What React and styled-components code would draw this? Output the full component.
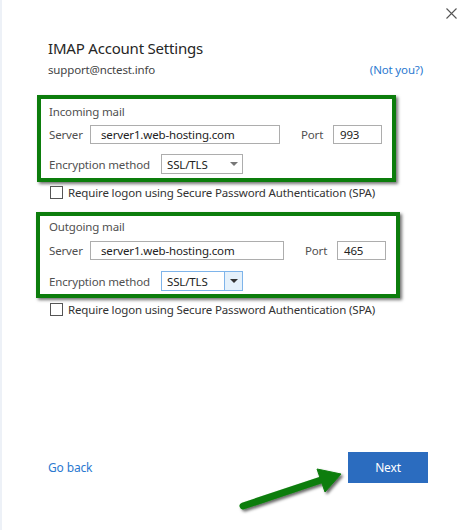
import React from "react";
import styled, { createGlobalStyle } from "styled-components";

const GlobalStyle = createGlobalStyle`
  html, body { margin: 0; padding: 0; background: #fff; }
  body { font-family: "Segoe UI", "Noto Sans", sans-serif; }
`;

const Dialog = styled.div`
  position: relative;
  width: 472px;
  height: 530px;
  box-sizing: border-box;
  border-left: 2px solid #edf1f7;
  background: #fff;
  display: flex;
  flex-direction: column;
  font-size: 11.5px;
  letter-spacing: -0.15px;
  color: #444;
  overflow: hidden;
`;

const TopBar = styled.div`
  height: 26px;
  display: flex;
  justify-content: flex-end;
  align-items: flex-start;
  padding: 8px 14px 0 0;
  box-sizing: border-box;
`;

const CloseButton = styled.button`
  width: 12px;
  height: 12px;
  padding: 0;
  border: none;
  background: none;
  cursor: pointer;
  display: flex;
`;

const Content = styled.div`
  padding: 12px 49px 0 46px;
  display: flex;
  flex-direction: column;
`;

const Title = styled.h1`
  margin: 0;
  font-size: 15px;
  line-height: 20px;
  letter-spacing: -0.2px;
  font-weight: 400;
  color: #262626;
`;

const AccountRow = styled.div`
  margin-top: 4px;
  display: flex;
  justify-content: space-between;
  line-height: 16px;
`;

const Link = styled.a`
  color: #2b79d0;
  text-decoration: none;
  cursor: pointer;
  font-size: ${(p) => p.$size || 11.5}px;
`;

const Highlight = styled.div`
  margin-top: ${(p) => p.$top}px;
  margin-left: ${(p) => p.$left}px;
  width: ${(p) => p.$width}px;
  box-sizing: border-box;
  border: 4px solid #0c7d0c;
  box-shadow: 2px 2px 3px rgba(0, 0, 0, 0.55);
  padding: ${(p) => p.$pad};
  display: flex;
  flex-direction: column;
`;

const GroupLabel = styled.div`
  line-height: 16px;
  color: #505050;
`;

const FieldRow = styled.div`
  margin-top: ${(p) => p.$top}px;
  display: flex;
  align-items: center;
  height: 20px;
`;

const Label = styled.span`
  width: ${(p) => p.$width}px;
  margin-left: ${(p) => p.$gap || 0}px;
  flex-shrink: 0;
  color: #505050;
`;

const TextInput = styled.div`
  width: ${(p) => p.$width}px;
  height: 19px;
  box-sizing: border-box;
  border: 1px solid #adadad;
  padding-left: ${(p) => p.$pad}px;
  display: flex;
  align-items: center;
  color: #222;
`;

const Select = styled.div`
  width: 82px;
  height: 20px;
  box-sizing: border-box;
  border: 1px solid ${(p) => (p.$active ? "#7eb4ea" : "#adadad")};
  display: flex;
  align-items: stretch;
  color: #222;
  background: #fff;
`;

const SelectValue = styled.span`
  flex: 1;
  padding-left: 5px;
  display: flex;
  align-items: center;
`;

const SelectButton = styled.span`
  width: 17px;
  display: flex;
  align-items: center;
  justify-content: center;
  background: ${(p) => (p.$active ? "#e5f1fb" : "transparent")};
  border-left: 1px solid ${(p) => (p.$active ? "#7eb4ea" : "transparent")};
`;

const Caret = styled.span`
  width: 0;
  height: 0;
  border-left: 4px solid transparent;
  border-right: 4px solid transparent;
  border-top: 4px solid ${(p) => (p.$active ? "#333" : "#777")};
`;

const CheckRow = styled.label`
  margin-top: ${(p) => p.$top}px;
  margin-left: 2px;
  display: flex;
  align-items: center;
  gap: 5px;
  height: 13px;
  color: #333;
`;

const Checkbox = styled.span`
  width: 13px;
  height: 13px;
  box-sizing: border-box;
  border: 1px solid #555;
  background: #fff;
`;

const Spacer = styled.div`
  flex: 1;
`;

const Footer = styled.div`
  display: flex;
  align-items: center;
  justify-content: space-between;
  padding: 0 44px 47px 46px;
`;

const NextButton = styled.button`
  width: 80px;
  height: 31px;
  border: none;
  background: #2b6cbf;
  color: #fff;
  font-family: inherit;
  font-size: 12px;
  letter-spacing: -0.15px;
  cursor: pointer;
`;

const Annotation = styled.svg`
  position: absolute;
  left: 0;
  top: 0;
  pointer-events: none;
`;

const MailGroup = ({ title, server, port, wide, active, top, left, width, pad }) => (
  <Highlight $top={top} $left={left} $width={width} $pad={pad}>
    <GroupLabel>{title}</GroupLabel>
    <FieldRow $top={wide ? 5 : 4}>
      <Label $width={41}>Server</Label>
      <TextInput $width={wide ? 194 : 190} $pad={10}>{server}</TextInput>
      <Label $width={32} $gap={21}>Port</Label>
      <TextInput $width={49} $pad={6}>{port}</TextInput>
    </FieldRow>
    <FieldRow $top={wide ? 11 : 10}>
      <Label $width={112}>Encryption method</Label>
      <Select $active={active}>
        <SelectValue>SSL/TLS</SelectValue>
        <SelectButton $active={active}>
          <Caret $active={active} />
        </SelectButton>
      </Select>
    </FieldRow>
  </Highlight>
);

export default function App() {
  return (
    <>
      <GlobalStyle />
      <Dialog>
        <TopBar>
          <CloseButton aria-label="Close">
            <svg width="11" height="11" viewBox="0 0 11 11">
              <path d="M0.5 0.5 L10.5 10.5 M10.5 0.5 L0.5 10.5" stroke="#555" strokeWidth="1.1" />
            </svg>
          </CloseButton>
        </TopBar>
        <Content>
          <Title>IMAP Account Settings</Title>
          <AccountRow>
            <span>support@nctest.info</span>
            <Link>(Not you?)</Link>
          </AccountRow>
          <MailGroup
            title="Incoming mail"
            server="server1.web-hosting.com"
            port="993"
            top={17}
            left={-11}
            width={359}
            pad="5px 8px 4px 8px"
          />
          <CheckRow $top={4}>
            <Checkbox />
            Require logon using Secure Password Authentication (SPA)
          </CheckRow>
          <MailGroup
            title="Outgoing mail"
            server="server1.web-hosting.com"
            port="465"
            wide
            active
            top={13}
            left={-12}
            width={364}
            pad="3px 8px 3px 9px"
          />
          <CheckRow $top={5}>
            <Checkbox />
            Require logon using Secure Password Authentication (SPA)
          </CheckRow>
        </Content>
        <Spacer />
        <Footer>
          <Link $size={12}>Go back</Link>
          <NextButton>Next</NextButton>
        </Footer>
        <Annotation width="472" height="530" viewBox="0 0 472 530">
          <defs>
            <filter id="arrowShadow" x="-20%" y="-40%" width="140%" height="180%">
              <feDropShadow dx="2" dy="2" stdDeviation="1.6" floodColor="#000" floodOpacity="0.6" />
            </filter>
          </defs>
          <g filter="url(#arrowShadow)" fill="#0c7d0c" stroke="#0c7d0c">
            <line x1="241" y1="506" x2="322" y2="479" strokeWidth="7" strokeLinecap="round" />
            <polygon points="339,474 315,469 323,492" strokeWidth="1" strokeLinejoin="round" />
          </g>
        </Annotation>
      </Dialog>
    </>
  );
}
